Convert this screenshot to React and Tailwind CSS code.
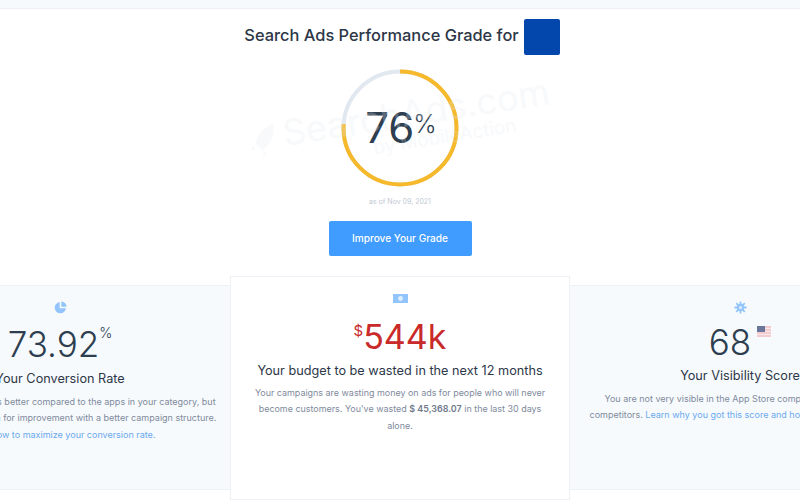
import React from "react";

function Pie() {
  return (
    <svg width="13" height="13" viewBox="0 0 16 16" fill="#93c5fd">
      <path d="M7 1.2A7 7 0 1 0 14.8 9H7z" />
      <path d="M9 0.5V7h6.5A6.6 6.6 0 0 0 9 0.5z" />
    </svg>
  );
}

function Cog() {
  return (
    <svg width="13" height="13" viewBox="0 0 16 16">
      <g stroke="#93c5fd" strokeWidth="2.2">
        <path d="M8 0.5v15M0.5 8h15M2.7 2.7l10.6 10.6M13.3 2.7L2.7 13.3" />
      </g>
      <circle cx="8" cy="8" r="4.6" fill="#93c5fd" />
      <circle cx="8" cy="8" r="2" fill="#dbeafe" />
    </svg>
  );
}

function Bill() {
  return (
    <svg width="15" height="9" viewBox="0 0 15 9">
      <rect width="15" height="9" fill="#93c5fd" />
      <circle cx="7.5" cy="4.5" r="2.4" fill="#e0efff" />
    </svg>
  );
}

function Flag() {
  return (
    <svg width="14" height="11" viewBox="0 0 14 11" className="opacity-70">
      <rect width="14" height="11" fill="#f3b8bd" />
      <path d="M0 2.5h14M0 5.5h14M0 8.5h14" stroke="#f8e3e4" strokeWidth="1" />
      <rect width="8" height="6" fill="#2f3f72" />
    </svg>
  );
}

function Side({ icon, value, title, titleClass, children }) {
  return (
    <div className="w-[340px] shrink-0 mt-[9px] h-[205px] bg-[#f7fafc] border-y border-[#eef1f5] flex flex-col items-center">
      <div className="h-[13px] mt-[15px] flex items-center">{icon}</div>
      {value}
      <div className={`text-[12.7px] leading-[20px] text-[#2d3748] whitespace-nowrap ${titleClass}`}>{title}</div>
      <div className="mt-[5px] text-[9px] leading-[16.3px] text-[#808a9c] text-center whitespace-nowrap">{children}</div>
    </div>
  );
}

export default function App() {
  return (
    <div className="relative w-[800px] h-[500px] overflow-hidden bg-white font-['Inter',sans-serif]">
      <div className="h-[9px] bg-[#f7fafc] border-b border-[#edf0f4]" />

      <div className="flex flex-col items-center">
        <div className="flex items-center gap-[5px] mt-[10px] h-[36px] ml-[4px]">
          <h1 className="text-[16.4px] leading-[20px] -mt-[4px] font-medium text-[#2d3748]">Search Ads Performance Grade for</h1>
          <div className="w-[36px] h-[36px] rounded-[2px] bg-[#0347ad]" />
        </div>

        <div className="relative w-[120px] h-[120px] mt-[13px] flex items-center justify-center">
          <svg width="120" height="120" viewBox="0 0 120 120" className="absolute inset-0 -rotate-90">
            <circle cx="60" cy="60" r="56.5" fill="none" stroke="#e2e8f0" strokeWidth="4" />
            <circle cx="60" cy="60" r="56.5" fill="none" stroke="#f6b92b" strokeWidth="4" strokeDasharray="269.8 355" />
          </svg>
          <div className="relative flex items-start text-[#2d3e50] ml-[2px]">
            <span className="text-[42px] leading-[50px]">76</span>
            <span className="text-[25px] leading-[24px] font-light mt-[9px] -ml-[1px]">%</span>
          </div>
        </div>

        <div className="mt-[9px] text-[7px] leading-[10px] text-[#c3c9d2]">as of Nov 09, 2021</div>

        <button className="mt-[14px] w-[143px] h-[35px] rounded-[2px] bg-[#409cff] text-white text-[10.1px] font-medium">Improve Your Grade</button>
      </div>

      <div className="flex justify-center -mx-[110px] mt-[20px] w-[1020px]">
        <Side
          icon={<Pie />}
          title="Your Conversion Rate"
          titleClass="mt-[5px]"
          value={
            <div className="flex items-start text-[#2d3e50] mt-[10px] h-[40px]">
              <span className="text-[35px] leading-[40px] font-light">73.92</span>
              <span className="text-[14px] leading-[18px] font-light">%</span>
            </div>
          }
        >
          <div>Your conversion rate is better compared to the apps in your category, but</div>
          <div>there is still more room for improvement with a better campaign structure.</div>
          <div className="text-[#6aa9ee]">Learn how to maximize your conversion rate.</div>
        </Side>

        <div className="w-[340px] shrink-0 h-[224px] bg-white border border-[#eef1f5] flex flex-col items-center">
          <div className="h-[9px] mt-[17px] flex items-center"><Bill /></div>
          <div className="flex items-start text-[#c92a2a] mt-[14px] h-[40px]">
            <span className="text-[15px] leading-[28px]">$</span>
            <span className="text-[34px] leading-[40px]">544k</span>
          </div>
          <div className="mt-[4px] text-[12.7px] leading-[20px] text-[#2d3748]">Your budget to be wasted in the next 12 months</div>
          <div className="mt-[4px] w-[300px] text-[8.95px] leading-[16.3px] text-[#808a9c] text-center">
            Your campaigns are wasting money on ads for people who will never become customers. You've wasted <b className="font-semibold text-[#6f7a8b]">$ 45,368.07</b> in the last 30 days alone.
          </div>
        </div>

        <Side
          icon={<Cog />}
          title="Your Visibility Score"
          titleClass="mt-[1px]"
          value={
            <div className="flex items-start text-[#2d3e50] h-[43px] mt-[8px]">
              <span className="text-[35px] leading-[40px] font-light">68</span>
              <span className="ml-[6px] mt-[4px]"><Flag /></span>
            </div>
          }
        >
          <div>You are not very visible in the App Store compared to your main</div>
          <div>competitors. <span className="text-[#6aa9ee]">Learn why you got this score and how you can improve it.</span></div>
        </Side>
      </div>

      <div className="absolute left-[245px] top-[95px] -rotate-[9deg] text-[#e2e8f0] opacity-25 pointer-events-none whitespace-nowrap">
        <svg width="30" height="38" viewBox="0 0 30 34" className="absolute left-[2px] top-[6px]" fill="#e2e8f0">
          <path d="M28 1C18 3 10 10 7 18l6 7c8-3 14-11 15-24zM6 20l-5 3 4 1zM14 27l-1 6 4-5z" />
        </svg>
        <div className="text-[36px] leading-[40px] pl-[38px]">SearchAds.com</div>
        <div className="text-[19px] leading-[18px] pl-[125px]">by MobileAction</div>
      </div>
    </div>
  );
}
